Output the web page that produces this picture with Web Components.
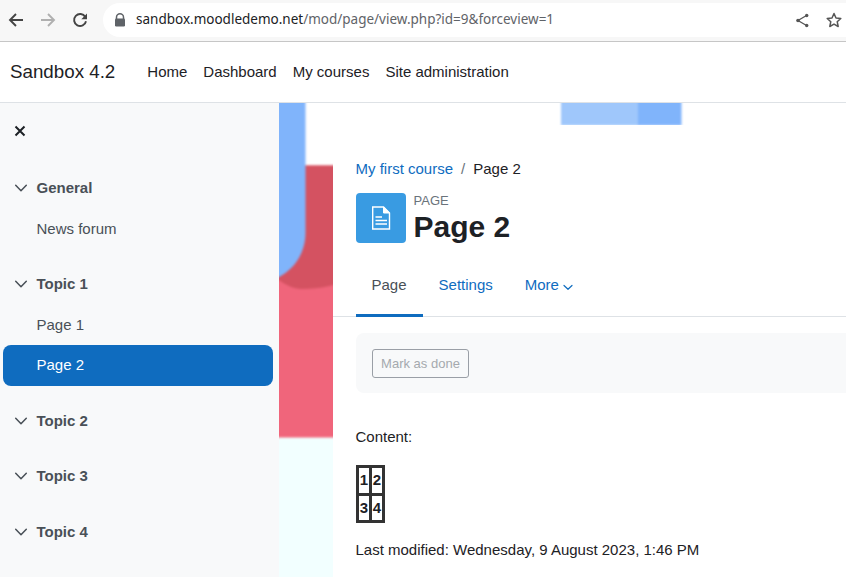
<!DOCTYPE html>
<html lang="en"><head><meta charset="utf-8"><title>Page 2</title>
<style>
html,body{margin:0;padding:0;height:100%;overflow:hidden;background:#fff;font:15px/1.5 "Liberation Sans",Arial,sans-serif;color:#1d2125}
</style></head><body>
<browser-bar url-host="sandbox.moodledemo.net" url-path="/mod/page/view.php?id=9&amp;forceview=1"></browser-bar>
<top-nav brand="Sandbox 4.2">
  <a>Home</a><a>Dashboard</a><a>My courses</a><a>Site administration</a>
</top-nav>
<page-shell>
  <course-drawer slot="drawer">
    <drawer-section title="General"><drawer-item>News forum</drawer-item></drawer-section>
    <drawer-section title="Topic 1"><drawer-item>Page 1</drawer-item><drawer-item active>Page 2</drawer-item></drawer-section>
    <drawer-section title="Topic 2"></drawer-section>
    <drawer-section title="Topic 3"></drawer-section>
    <drawer-section title="Topic 4"></drawer-section>
  </course-drawer>
  <page-main></page-main>
</page-shell>
<script>
function def(name, html, init){
  customElements.define(name, class extends HTMLElement{
    constructor(){super();this.attachShadow({mode:'open'}).innerHTML=html;}
    connectedCallback(){if(init)init(this,this.shadowRoot);}
  });
}
const chev=`<svg width="14" height="14" viewBox="0 0 14 14" fill="none" stroke="#495057" stroke-width="1.5" stroke-linecap="round" stroke-linejoin="round"><path d="M1.700 4.300 7 9.800 12.300 4.300"/></svg>`;

def('browser-bar',`<style>
:host{display:flex;box-sizing:border-box;height:42px;background:#f7f7f7;border-bottom:1px solid #c6c6c6;align-items:flex-start;padding:3px 0 0 0}
.nav{display:flex;width:103px;flex:none;height:34px;align-items:center;padding-left:7px;box-sizing:border-box;gap:14px}
svg{display:block;flex:none}
.pill{flex:1;height:34px;background:#fff;border-radius:17px 0 0 17px;display:flex;align-items:center;padding-left:11px;font:13.500px/1 "Noto Sans",sans-serif;color:#202124;min-width:0;position:relative}
.pill span.path{color:#5f6368}
.host{margin-left:10px;white-space:nowrap}
.acts{margin-left:auto;display:flex;align-items:center;gap:16px;padding-right:4px}
</style>
<div class="nav">
<svg width="18" height="18" viewBox="0 0 18 18" fill="none" stroke="#444" stroke-width="1.900"><path d="M16 9H3.500M9 3 3 9 9 15"/></svg>
<svg width="18" height="18" viewBox="0 0 18 18" fill="none" stroke="#b0b0b0" stroke-width="1.900"><path d="M2 9H14.500M9 3 15 9 9 15"/></svg>
<svg width="18" height="18" viewBox="0 0 18 18" fill="none" stroke="#444" stroke-width="1.900"><path d="M14.300 6A6 6 0 1 0 15 10.200"/><path d="M16 2.500v5.700H10.300z" fill="#444" stroke="none"/></svg>
</div>
<div class="pill">
<svg width="12" height="14" viewBox="0 0 12 14"><path d="M2.500 6V4.300a3.500 3.500 0 0 1 7 0V6" fill="none" stroke="#5f6368" stroke-width="1.500"/><rect x="1" y="5.500" width="10" height="8" rx="1.200" fill="#5f6368"/></svg>
<div class="host" id="u"></div>
<div class="acts">
<svg width="15" height="15" viewBox="0 0 15 15" fill="#555" stroke="#555"><path d="M11.500 2.500 3 7.500l8.500 5" fill="none" stroke-width="1.300"/><circle cx="11.700" cy="2.500" r="1.700" stroke="none"/><circle cx="3" cy="7.500" r="1.800" stroke="none"/><circle cx="11.700" cy="12.500" r="1.700" stroke="none"/></svg>
<svg width="16" height="16" viewBox="0 0 16 16" fill="none" stroke="#555" stroke-width="1.500" stroke-linejoin="round"><path d="M8 1.500 10 6l4.800.5-3.600 3.200 1 4.800L8 12.100 3.800 14.500l1-4.800L1.200 6.500 6 6z"/></svg>
</div></div>`,(el,s)=>{
  const u=s.getElementById('u');u.textContent=el.getAttribute('url-host');
  const p=document.createElement('span');p.className='path';p.textContent=el.getAttribute('url-path');u.append(p);
});

def('top-nav',`<style>
:host{display:flex;box-sizing:border-box;height:61px;align-items:center;background:#fff;border-bottom:1px solid #dee2e6;padding-left:10px}
.brand{font-size:18.750px;color:#1d2125;margin-right:24px;white-space:nowrap}
nav{display:flex}
::slotted(a){padding:0 8px;color:#1d2125;white-space:nowrap}
</style><div class="brand" id="b"></div><nav><slot></slot></nav>`,(el,s)=>{s.getElementById('b').textContent=el.getAttribute('brand');});

def('page-shell',`<style>
:host{display:flex;position:relative;height:474px;overflow:hidden}
.bg{position:absolute;left:0;top:0;width:846px;height:474px;z-index:0}
::slotted(course-drawer){position:relative;z-index:1}
.slot{position:relative;z-index:1;display:flex;flex:1;min-width:0}
</style>
<svg class="bg" viewBox="0 103 846 474" preserveAspectRatio="none" aria-hidden="true">
<defs><filter id="b" x="-5%" y="-5%" width="110%" height="110%" color-interpolation-filters="sRGB"><feGaussianBlur stdDeviation=".8"/></filter></defs>
<rect x="0" y="103" width="846" height="474" fill="#fff"/>
<rect x="270" y="437" width="80" height="150" fill="#f2ffff"/>
<g filter="url(#b)">
<rect x="270" y="165.500" width="80" height="272" fill="#f0657b"/>
<path d="M270 165.500H350V279C338 285 320 289 302 289C292 289 284 284 270 274z" fill="#d45261"/>
<path d="M270 95H305.500V233A50 50 0 0 1 255.500 283H270z" fill="#80b4fb"/>
<rect x="561" y="95" width="78" height="30.500" fill="#9fc7fb"/>
<rect x="638" y="95" width="43.500" height="30.500" fill="#80b4fb"/>
</g></svg>
<slot name="drawer"></slot><div class="slot"><slot></slot></div>`);

def('course-drawer',`<style>
:host{display:block;box-sizing:border-box;width:279px;flex:none;background:#f8f9fa;padding-top:17px;height:100%;overflow:hidden}
.close{display:block;margin:5px 0 0 14px}
.list{margin-top:31px;display:flex;flex-direction:column;gap:15px}
</style>
<svg class="close" width="12" height="12" viewBox="0 0 12 12" fill="none" stroke="#1d2125" stroke-width="2"><path d="M1.500 1.500l9 9M10.500 1.500l-9 9"/></svg>
<div class="list"><slot></slot></div>`);

def('drawer-section',`<style>
:host{display:block}
.h{display:flex;align-items:center;height:40.500px;font-weight:700;color:#495057;padding-left:14px}
.h svg{display:block;margin-right:8.500px}
</style><div class="h">${chev}<span id="t"></span></div><slot></slot>`,(el,s)=>{s.getElementById('t').textContent=el.getAttribute('title');});

def('drawer-item',`<style>
:host{display:flex;align-items:center;height:40.500px;margin:0 6px 0 3px;padding-left:33.500px;border-radius:8px;color:#495057}
:host([active]){background:#0f6cbf;color:#fff}
</style><slot></slot>`);

def('page-main',`<style>
:host{display:block;box-sizing:border-box;flex:none;width:513px;margin:22px 0 0 54px;background:#fff;height:calc(100% - 22px)}
.in{margin-left:23px}
.crumb{height:22px;margin:33px 0 0 -.5px;display:flex;align-items:center;white-space:nowrap}
.crumb a{color:#0f6cbf}.crumb i{font-style:normal;color:#6a737b;padding:0 8px}
.head{display:flex;margin-top:13px;height:50px}
.ico{width:50px;height:50px;background:#399be2;border-radius:4px;display:flex;align-items:center;justify-content:center;flex:none}
.ttl{margin-left:7.500px;display:flex;flex-direction:column}
.pg{font-size:13px;line-height:14px;color:#6a737b;margin-top:.5px}
h1{margin:-.5px 0 0;font-size:30px;line-height:40px;font-weight:700;color:#1d2125}
.tabs{display:flex;margin-top:21px;border-bottom:1px solid #dee2e6;height:52px;padding-left:23px}
.tab{box-sizing:border-box;height:53px;flex:none;padding:0 16.500px 10px 15.500px;display:flex;align-items:center;color:#0f6cbf}
.tab.on{color:#495057;border-bottom:3px solid #0f6cbf;padding-bottom:7px}
.tab svg{margin-left:4px;margin-top:3px}
.panel{margin-top:16px;height:60px;background:#f8f9fa;border-radius:8px 0 0 8px;display:flex;align-items:center;padding-left:16px}
.btn{box-sizing:border-box;width:97px;height:29px;padding-top:1px;border:1px solid #9a9fa6;border-radius:3px;font-size:13px;color:#a5a9ae;display:flex;align-items:center;justify-content:center;background:#f8f9fa}
.c{margin:33px 0 0 -.5px;height:22px;line-height:22px}
.t{display:grid;grid-template-columns:10px 10px;grid-auto-rows:24.500px;gap:3px;padding:3px;background:#333;width:max-content;margin-top:17px}
.t b{background:#fff;display:flex;align-items:center;justify-content:center;color:#1d2125}
.m{margin:16px 0 0 -.5px;line-height:22px;white-space:nowrap}
</style>
<div class="in">
<div class="crumb"><a>My first course</a><i>/</i><span>Page 2</span></div>
<div class="head"><div class="ico"><svg width="20" height="24" viewBox="0 0 20 24" fill="none" stroke="#fff" stroke-width="1.400"><path d="M1.700 1H12.500L18.500 7V23H1.700z"/><path d="M12.500 1V7H18.500z" fill="#fff" stroke-width="1"/><path d="M4.500 11H11M4.500 14.500H16M4.500 18H16" stroke-width="1.500"/></svg></div>
<div class="ttl"><div class="pg">PAGE</div><h1>Page 2</h1></div></div>
</div>
<div class="tabs">
<div class="tab on">Page</div><div class="tab">Settings</div><div class="tab">More<svg width="10" height="10" viewBox="0 0 10 10" fill="none" stroke="#0f6cbf" stroke-width="1.200" stroke-linecap="round" stroke-linejoin="round"><path d="M1 3.500 5 7.300l4-3.800"/></svg></div>
</div>
<div class="in">
<div class="panel"><div class="btn">Mark as done</div></div>
<div class="c">Content:</div>
<div class="t"><b>1</b><b>2</b><b>3</b><b>4</b></div>
<div class="m">Last modified: Wednesday, 9 August 2023, 1:46 PM</div>
</div>`);
</script>
</body></html>
